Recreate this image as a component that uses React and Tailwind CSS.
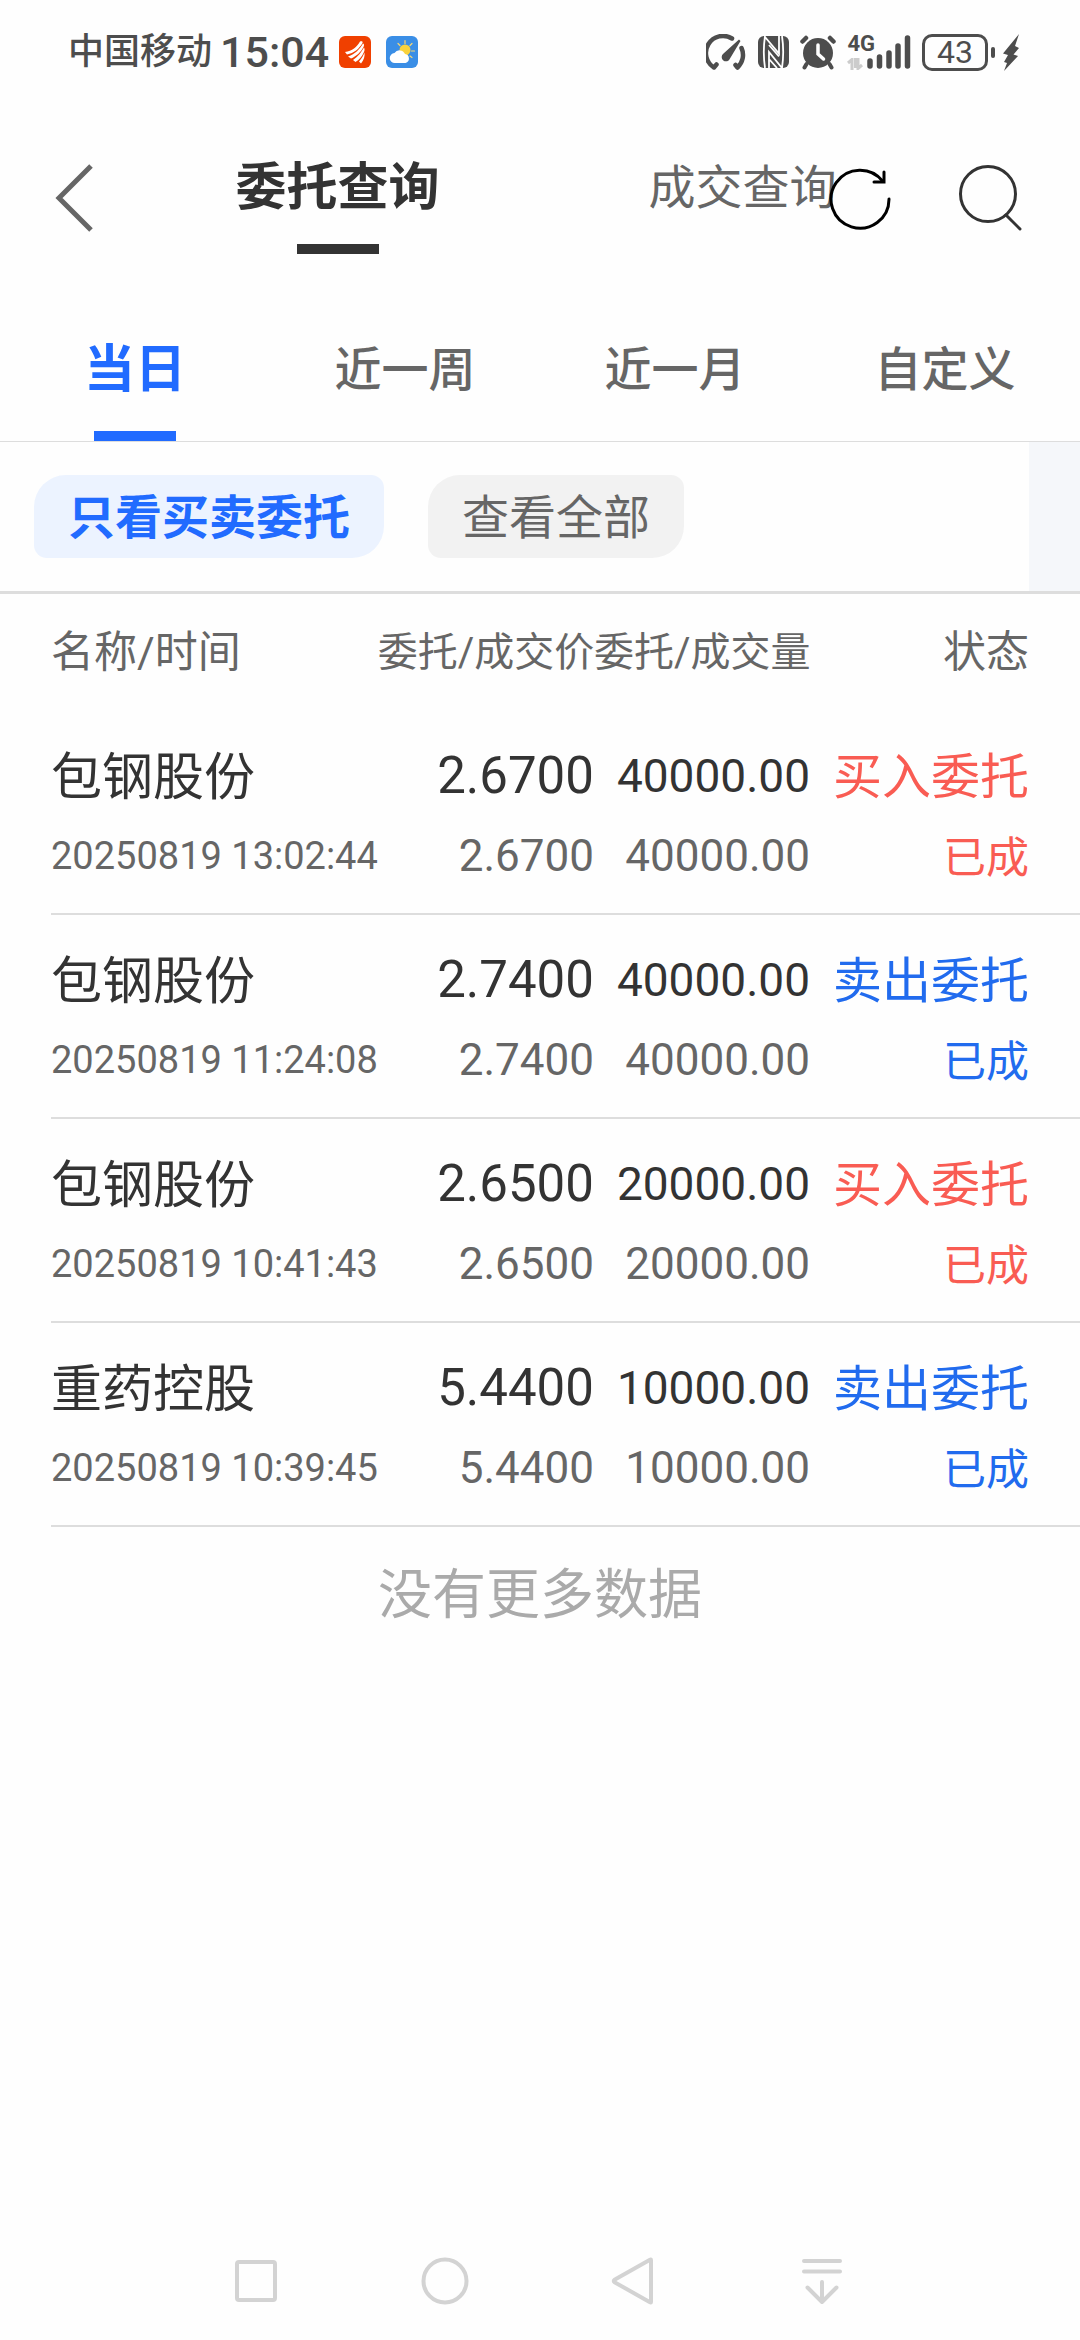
import React, { useState } from 'react';

const orders = [
  { name: '包钢股份', time: '20250819 13:02:44', price: '2.6700', dealPrice: '2.6700', amount: '40000.00', dealAmount: '40000.00', side: 'buy', status: '已成' },
  { name: '包钢股份', time: '20250819 11:24:08', price: '2.7400', dealPrice: '2.7400', amount: '40000.00', dealAmount: '40000.00', side: 'sell', status: '已成' },
  { name: '包钢股份', time: '20250819 10:41:43', price: '2.6500', dealPrice: '2.6500', amount: '20000.00', dealAmount: '20000.00', side: 'buy', status: '已成' },
  { name: '重药控股', time: '20250819 10:39:45', price: '5.4400', dealPrice: '5.4400', amount: '10000.00', dealAmount: '10000.00', side: 'sell', status: '已成' },
];

const queryTabs = ['委托查询', '成交查询'];
const dateTabs = ['当日', '近一周', '近一月', '自定义'];
const filters = ['只看买卖委托', '查看全部'];

const StatusBar = () => (
  <div className="flex h-[102px] items-center justify-between pt-[2px] pr-[60px] pl-[68px] text-[#4d4d4d]">
    <div className="flex items-center">
      <span className="text-[36px] font-medium">中国移动</span>
      <span className="ml-2 text-[43px] font-medium">15:04</span>
      <svg className="ml-[10px] h-8 w-8" viewBox="0 0 32 32">
        <rect width="32" height="32" rx="6" fill="#f04000" />
        <g fill="#fff">
          <path d="M6 16C13 15 18 11 21 5.500C23 5 24 5.500 23.500 7C20 13 15 17 8 18.500Z" />
          <path d="M9 20.500C16 18 21 13 24 7.500C25.500 8 25 10 24.500 11C22 16 17 20.500 12 22.500Z" />
          <path d="M14 24C19 20.500 22.500 16 25 11.500C26 13 25.500 15 25 16C23 20.500 20 24 16.500 26Z" />
          <path d="M20 25.500C23 22 24.500 19 25.500 16.500C26 20 25 24 22 27.500Z" />
        </g>
      </svg>
      <svg className="ml-[15px] h-8 w-8" viewBox="0 0 32 32">
        <rect width="32" height="32" rx="6" fill="#3a8ee6" />
        <path d="M19 4.500v3M12 7.500l2 2M26 7.500l-2 2M28.500 15h-3M26 21.500l-2-1.500" stroke="#f7d774" strokeWidth="1.200" strokeLinecap="round" />
        <circle cx="19" cy="14" r="5.500" fill="#f9d23c" />
        <path d="M9 27a5 5 0 0 1-.5-10a6 6 0 0 1 10.500 1a4.600 4.600 0 0 1 .5 9Z" fill="#fff" />
      </svg>
    </div>

    <div className="flex items-center">
      {/* Vitesse réseau */}
      <svg className="h-9 w-10" viewBox="0 0 40 36" fill="none" stroke="currentColor" strokeWidth="4.500" strokeLinecap="round" strokeLinejoin="round">
        <path d="M10.500 30.500L8 33.500A17 17 0 0 1 26 4.500M35.500 14A17 17 0 0 1 31.500 33.500L29.500 31" />
        <path d="M33 5.500L34.500 7L24 24.500A4.300 4.300 0 1 1 17.500 19.500Z" fill="currentColor" stroke="none" />
      </svg>
      {/* NFC */}
      <svg className="ml-3 h-8 w-8" viewBox="0 0 32 32">
        <rect width="31" height="32" rx="6" fill="currentColor" />
        <path d="M7 0C5.500 10 5.500 22 7 32M7 1L21 17.500V0M24 0C25.500 10 25.500 22 24 32L11 16V32M11 9L21 20.500M11 23L19 32" stroke="#fff" strokeWidth="1.800" fill="none" />
      </svg>
      {/* Alarme */}
      <svg className="ml-[10px] h-9 w-9" viewBox="0 0 36 36" stroke="currentColor" strokeLinecap="round">
        <circle cx="18" cy="19" r="15" fill="currentColor" stroke="none" />
        <path d="M2.500 7.500L6 4M33.500 7.500L30 4" strokeWidth="4.500" />
        <path d="M6.500 30L4.500 33.500M29.500 30L31.500 33.500" strokeWidth="4" />
        <path d="M18 11V20L23.500 25" stroke="#fff" strokeWidth="3.500" fill="none" />
      </svg>
      <div className="ml-[11px] flex h-9 flex-col justify-between">
        <span className="text-[22px] leading-5 font-bold">4G</span>
        <svg className="h-3 w-4" viewBox="0 0 16 12" fill="none" stroke="#ccc" strokeWidth="3">
          <path d="M1 5L5 1.500V12M8.500 0V10M11 0V10.500L15 7" />
        </svg>
      </div>
      <svg className="-ml-2 h-9 w-11" viewBox="0 0 44 36" stroke="currentColor" strokeWidth="5.500" strokeLinecap="round">
        <path d="M3 27V32M12.500 23V32M22 19V32M31 12V32M40.500 4V32" />
      </svg>
      <div className="ml-[11px] flex h-[37px] w-[66px] items-center justify-center rounded-[10px] border-[3px] border-current text-[32px] leading-none">43</div>
      <div className="ml-[3px] h-[11px] w-1 rounded-full bg-current" />
      <svg className="ml-[7px] h-[37px] w-[18px]" viewBox="0 0 18 37" fill="currentColor">
        <path d="M17 0L1 19.500L6 21L2 28L5 29L2 37L16 22L11.500 20.500L17 14L13 12Z" />
      </svg>
    </div>
  </div>
);

const Header = () => {
  const [active, setActive] = useState(0);

  return (
    <header className="relative flex h-[192px]">
      <button aria-label="返回" className="flex w-1/8 items-center pl-[54px]">
        <svg className="h-[70px] w-[42px]" viewBox="0 0 42 70" fill="none" stroke="#666" strokeWidth="5">
          <path d="M37 3L5 35L37 67" />
        </svg>
      </button>
      {queryTabs.map((label, index) => (
        <button key={label} onClick={() => setActive(index)} className="flex flex-1 flex-col items-center pt-[58px]">
          <span className={active === index ? 'text-[51px] leading-[56px] font-bold text-[#333]' : 'text-[47px] leading-[56px] text-[#666]'}>
            {label}
          </span>
          {active === index && <span className="mt-7 h-[10px] w-[82px] bg-[#333]" />}
        </button>
      ))}
      <button aria-label="搜索" className="flex w-1/8 items-center pl-3">
        <svg className="h-[70px] w-[66px]" viewBox="0 0 66 70" fill="none" stroke="#333" strokeWidth="3" strokeLinecap="round">
          <circle cx="31" cy="31" r="27.500" />
          <path d="M49 52L63 66" />
        </svg>
      </button>
      {/* Le bouton actualiser chevauche le deuxième onglet */}
      <button aria-label="刷新" className="absolute inset-y-0 right-[188px] flex items-center">
        <svg className="h-[68px] w-16" viewBox="0 0 64 68" fill="none" stroke="#000" strokeWidth="3" strokeLinecap="round">
          <path d="M61 35A29 29 0 1 1 55 17.500" />
          <path d="M56 8V18H46" />
        </svg>
      </button>
    </header>
  );
};

const DateTabs = () => {
  const [active, setActive] = useState(0);

  return (
    <nav className="flex h-[148px] border-b border-[#ddd]">
      {dateTabs.map((label, index) => (
        <button key={label} onClick={() => setActive(index)} className="flex flex-1 flex-col items-center justify-between pt-12">
          <span className={active === index ? 'text-[51px] leading-[56px] font-bold text-[#216bff]' : 'text-[47px] leading-[56px] font-medium text-[#666]'}>
            {label}
          </span>
          {active === index && <span className="h-[10px] w-[82px] bg-[#216bff]" />}
        </button>
      ))}
    </nav>
  );
};

const Filters = () => {
  const [active, setActive] = useState(0);

  return (
    <div className="flex h-[152px] justify-between border-b-[3px] border-[#ddd]">
      <div className="flex items-center gap-11 pl-[34px]">
        {filters.map((label, index) => (
          <button
            key={label}
            onClick={() => setActive(index)}
            className={`h-[83px] rounded-tl-[32px] rounded-tr-[13px] rounded-br-[32px] rounded-bl-[13px] px-[34px] pt-[2px] text-[47px] leading-[56px] ${
              active === index ? 'bg-[#ecf3ff] font-bold text-[#216bff]' : 'bg-[#f2f2f2] text-[#666]'
            }`}
          >
            {label}
          </button>
        ))}
      </div>
      <div className="w-[51px] bg-[#f5f7fa]" />
    </div>
  );
};

const OrderTable = () => (
  <div className="pl-[51px]">
    <table className="w-full table-fixed whitespace-nowrap text-[#666]">
      <colgroup>
        <col />
        <col className="w-[21%]" />
        <col className="w-[21%]" />
        <col className="w-[270px]" />
      </colgroup>
      <thead>
        <tr className="h-[117px]">
          <th className="text-left text-[43px] font-normal">名称/时间</th>
          <th className="text-right text-[40px] font-normal">委托/成交价</th>
          <th className="text-right text-[40px] font-normal">委托/成交量</th>
          <th className="pr-[51px] text-right text-[43px] font-normal">状态</th>
        </tr>
      </thead>
      <tbody>
        {orders.map((order) => (
          <tr key={order.time} className="border-b-2 border-[#ddd] text-right">
            <td className="pt-[25px] pb-[21px] text-left">
              <div className="text-[51px] leading-[84px] text-[#333]">{order.name}</div>
              <div className="text-[38px] leading-[72px]">{order.time}</div>
            </td>
            <td className="pt-[25px] pb-[17px]">
              <div className="text-[51px] leading-[80px] text-[#333]">{order.price}</div>
              <div className="text-[44px] leading-[80px]">{order.dealPrice}</div>
            </td>
            <td className="pt-[25px] pb-[17px]">
              <div className="text-[46px] leading-[80px] text-[#333]">{order.amount}</div>
              <div className="text-[44px] leading-[80px]">{order.dealAmount}</div>
            </td>
            <td className={`pt-[27px] pr-[51px] pb-[15px] ${order.side === 'buy' ? 'text-[#f95c53]' : 'text-[#216bee]'}`}>
              <div className="text-[49px] leading-[80px]">{order.side === 'buy' ? '买入委托' : '卖出委托'}</div>
              <div className="text-[43px] leading-[80px]">{order.status}</div>
            </td>
          </tr>
        ))}
      </tbody>
    </table>
  </div>
);

const SystemNav = () => (
  <div className="mt-auto flex h-[118px] items-center pr-[164px] pl-[162px]">
    <button aria-label="最近任务" className="flex flex-1 justify-center">
      <svg className="h-12 w-12" viewBox="0 0 48 48" fill="none" stroke="#d3d3d3" strokeWidth="4">
        <rect x="5" y="5" width="38" height="38" rx="2" />
      </svg>
    </button>
    <button aria-label="主页" className="flex flex-1 justify-center">
      <svg className="h-12 w-12" viewBox="0 0 48 48" fill="none" stroke="#d3d3d3" strokeWidth="4">
        <circle cx="24" cy="24" r="21.500" />
      </svg>
    </button>
    <button aria-label="后退" className="flex flex-1 justify-center">
      <svg className="h-12 w-12" viewBox="0 0 48 48" fill="none" stroke="#d3d3d3" strokeWidth="4" strokeLinejoin="round">
        <path d="M42 3V45Q42 46 41 45.200L5.500 25.200Q4 24 5.500 22.800L41 2.800Q42 2 42 3Z" />
      </svg>
    </button>
    <button aria-label="下拉通知" className="flex flex-1 justify-center">
      <svg className="h-12 w-12" viewBox="0 0 48 48" fill="none" stroke="#d3d3d3" strokeWidth="4" strokeLinecap="round" strokeLinejoin="round">
        <path d="M6 4H42M6 14.500H42M24 25V45M9.500 30.500L24 45L38.500 30.500" />
      </svg>
    </button>
  </div>
);

const App = () => {
  return (
    <div className="flex min-h-screen flex-col bg-[#fefefe] font-[Roboto,'Noto_Sans_CJK_SC',sans-serif]">
      <StatusBar />
      <Header />
      <DateTabs />
      <Filters />
      <OrderTable />
      <p className="pt-[29px] text-center text-[54px] leading-[80px] text-[#aaa]">没有更多数据</p>
      <SystemNav />
    </div>
  );
};

export default App;
